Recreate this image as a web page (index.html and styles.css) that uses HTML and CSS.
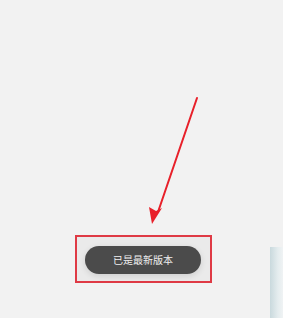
FILE: index.html
```html
<!DOCTYPE html>
<html lang="zh">
<head>
<meta charset="utf-8">
<link rel="stylesheet" href="styles.css">
</head>
<body>
<div class="screen">
  <div class="toast-frame">
    <div class="toast">已是最新版本</div>
  </div>
  <div class="side-panel"></div>
  <svg class="arrow" width="283" height="318" viewBox="0 0 283 318">
    <line x1="197" y1="98" x2="158" y2="212" stroke="#e8202a" stroke-width="2" stroke-linecap="round"/>
    <polygon points="152,224 149,207 156,211 162,208" fill="#e8202a"/>
  </svg>
</div>
</body>
</html>
```
FILE: styles.css
```css
html, body {
  margin: 0;
  padding: 0;
  background: #f2f2f2;
}
.screen {
  position: relative;
  width: 283px;
  height: 318px;
  overflow: hidden;
  display: flex;
  flex-direction: column;
  padding-top: 235px;
  padding-left: 75px;
  box-sizing: border-box;
  font-family: "Noto Sans CJK SC", "Noto Sans", sans-serif;
}
.toast-frame {
  width: 137px;
  height: 48px;
  box-sizing: border-box;
  border: 2px solid #df3a45;
  background: #eaeaea;
  display: flex;
  padding: 9px 0 0 8px;
}
.toast {
  width: 116px;
  height: 28px;
  border-radius: 14px;
  background: #4b4b4b;
  color: #f0f0f0;
  font-size: 10px;
  line-height: 28px;
  text-align: center;
  box-shadow: 0 2px 6px rgba(0,0,0,0.12);
}
.side-panel {
  position: absolute;
  left: 270px;
  top: 247px;
  width: 13px;
  height: 71px;
  background: linear-gradient(90deg, #c9d9dd 0%, #e4ecee 60%, #f0f3f4 100%);
}
.arrow {
  position: absolute;
  left: 0;
  top: 0;
  pointer-events: none;
}
```
